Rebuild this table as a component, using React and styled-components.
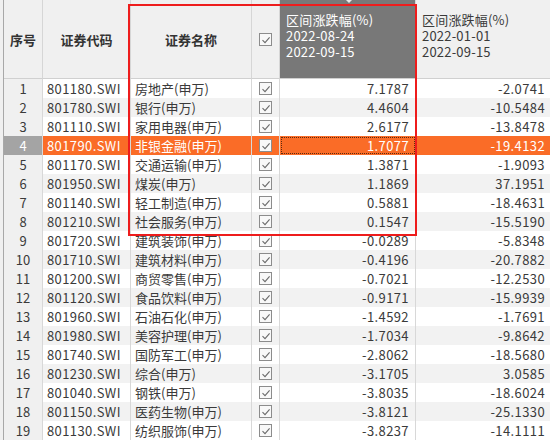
import React from 'react'
import styled, { createGlobalStyle } from 'styled-components'

const rows = [
  ['801180.SWI', '房地产(申万)', '7.1787', '-2.0741'],
  ['801780.SWI', '银行(申万)', '4.4604', '-10.5484'],
  ['801110.SWI', '家用电器(申万)', '2.6177', '-13.8478'],
  ['801790.SWI', '非银金融(申万)', '1.7077', '-19.4132'],
  ['801170.SWI', '交通运输(申万)', '1.3871', '-1.9093'],
  ['801950.SWI', '煤炭(申万)', '1.1869', '37.1951'],
  ['801140.SWI', '轻工制造(申万)', '0.5881', '-18.4631'],
  ['801210.SWI', '社会服务(申万)', '0.1547', '-15.5190'],
  ['801720.SWI', '建筑装饰(申万)', '-0.0289', '-5.8348'],
  ['801710.SWI', '建筑材料(申万)', '-0.4196', '-20.7882'],
  ['801200.SWI', '商贸零售(申万)', '-0.7021', '-12.2530'],
  ['801120.SWI', '食品饮料(申万)', '-0.9171', '-15.9939'],
  ['801960.SWI', '石油石化(申万)', '-1.4592', '-1.7691'],
  ['801980.SWI', '美容护理(申万)', '-1.7034', '-9.8642'],
  ['801740.SWI', '国防军工(申万)', '-2.8062', '-18.5680'],
  ['801230.SWI', '综合(申万)', '-3.1705', '3.0585'],
  ['801040.SWI', '钢铁(申万)', '-3.8035', '-18.6024'],
  ['801150.SWI', '医药生物(申万)', '-3.8121', '-25.1330'],
  ['801130.SWI', '纺织服饰(申万)', '-3.8237', '-14.1111'],
]

const SELECTED = 3

function Check() {
  return (
    <CheckBox>
      <svg width="10" height="10" viewBox="0 0 10 10">
        <path d="M1.5 5.2 L4 7.6 L8.6 2.4" fill="none" stroke="#6a6a6a" strokeWidth="1.1" />
      </svg>
    </CheckBox>
  )
}

function App() {
  return (
    <>
      <GlobalStyle />
      <Frame>
        <Grid>
          <HeadCell>序号</HeadCell>
          <HeadCell>证券代码</HeadCell>
          <HeadCell>证券名称</HeadCell>
          <HeadCell><Check /></HeadCell>
          <RangeHead active>
            <SortMark />
            <HeadLine>区间涨跌幅(%)</HeadLine>
            <HeadLine>2022-08-24</HeadLine>
            <HeadLine>2022-09-15</HeadLine>
          </RangeHead>
          <RangeHead>
            <HeadLine>区间涨跌幅(%)</HeadLine>
            <HeadLine>2022-01-01</HeadLine>
            <HeadLine>2022-09-15</HeadLine>
          </RangeHead>
          {rows.map(([code, name, a, b], i) => {
            const hl = i === SELECTED
            const stripe = i % 2 === 1
            return (
              <React.Fragment key={code}>
                <IndexCell hl={hl}>{i + 1}</IndexCell>
                <Cell hl={hl} stripe={stripe} latin>{code}</Cell>
                <Cell hl={hl} stripe={stripe}>{name}</Cell>
                <CheckCell hl={hl} stripe={stripe}><Check /></CheckCell>
                <NumCell hl={hl} stripe={stripe} latin focus={hl}>{a}</NumCell>
                <NumCell hl={hl} stripe={stripe} latin>{b}</NumCell>
              </React.Fragment>
            )
          })}
        </Grid>
        <Marker />
      </Frame>
    </>
  )
}

const GlobalStyle = createGlobalStyle`
  html, body {
    margin: 0;
    padding: 0;
    background: #f0f0f0;
    overflow: hidden;
  }
`

const Frame = styled.div`
  position: relative;
  width: 550px;
  height: 440px;
  overflow: hidden;
  padding-left: 3px;
  box-sizing: border-box;
  background: #f0f0f0;
  font-family: "Noto Sans CJK SC", "Noto Sans", sans-serif;
  font-size: 13px;
  color: #3a3a3a;
`

const Grid = styled.div`
  display: grid;
  grid-template-columns: 39px 88px 121px 28px 136px 136px;
  grid-template-rows: 79px;
  grid-auto-rows: 19px;
  border-left: 1px solid #a8a8a8;
`

const HeadCell = styled.div`
  display: flex;
  align-items: center;
  justify-content: center;
  padding-top: 1px;
  font-weight: bold;
  color: #333;
  background: #f0f0f0;
  border-right: 1px solid #d6d6d6;
  border-bottom: 1px solid #d0d0d0;
  box-sizing: border-box;
`

const RangeHead = styled.div`
  position: relative;
  display: flex;
  flex-direction: column;
  justify-content: flex-start;
  padding: 12px 0 0 6px;
  background: ${(p) => (p.active ? '#787878' : '#f0f0f0')};
  color: ${(p) => (p.active ? '#ffffff' : '#3a3a3a')};
  border-right: 1px solid #d6d6d6;
  border-bottom: 1px solid #d0d0d0;
  box-sizing: border-box;
`

const HeadLine = styled.div`
  height: 16px;
  line-height: 16px;
  font-size: 13px;
  letter-spacing: 0.2px;
`

const SortMark = styled.span`
  position: absolute;
  top: 0;
  left: 66px;
  width: 0;
  height: 0;
  border-left: 3px solid transparent;
  border-right: 3px solid transparent;
  border-top: 3px solid #e8e8e8;
`

const Cell = styled.div`
  display: flex;
  align-items: center;
  padding: 0 4px;
  white-space: nowrap;
  overflow: hidden;
  box-sizing: border-box;
  letter-spacing: ${(p) => (p.latin ? '0.4px' : '0')};
  background: ${(p) => (p.hl ? '#fa6c27' : p.stripe ? '#f2f2f2' : '#ffffff')};
  color: ${(p) => (p.hl ? '#ffffff' : '#3a3a3a')};
  border-right: 1px solid #d8d8d8;
`

const IndexCell = styled(Cell)`
  justify-content: center;
  background: ${(p) => (p.hl ? '#a4a4a4' : '#f0f0f0')};
`

const CheckCell = styled(Cell)`
  justify-content: center;
  padding: 0;
`

const NumCell = styled(Cell)`
  justify-content: flex-end;
  padding-right: 6px;
  outline: ${(p) => (p.focus ? '1px dotted #5a2a10' : 'none')};
  outline-offset: -2px;
`

const CheckBox = styled.span`
  display: inline-flex;
  align-items: center;
  justify-content: center;
  width: 11px;
  height: 11px;
  border: 1px solid #8c8c8c;
  background: #f8f8f8;
`

const Marker = styled.div`
  position: absolute;
  left: 128px;
  top: 4px;
  width: 289px;
  height: 232px;
  border: 2px solid #ee1c1c;
  box-sizing: border-box;
  pointer-events: none;
`

export default App
